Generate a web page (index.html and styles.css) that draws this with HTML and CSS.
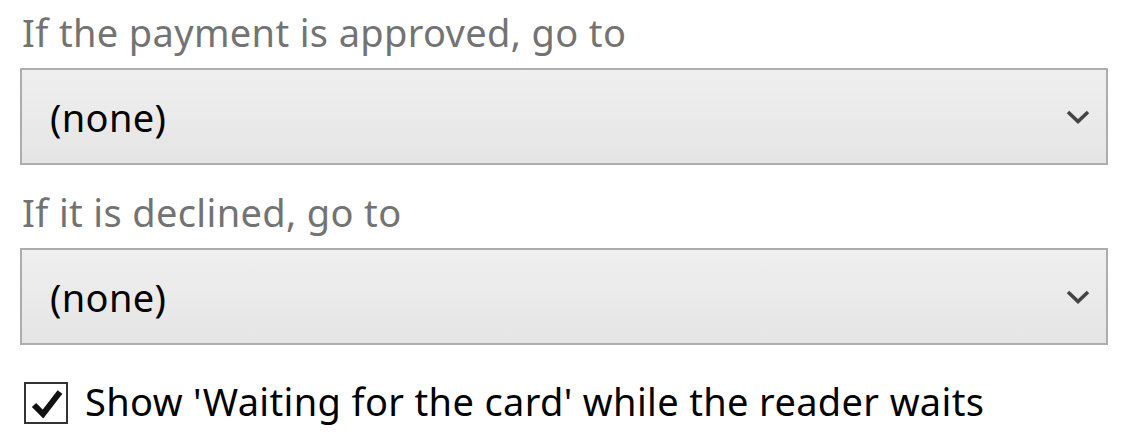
FILE: index.html
```html
<!DOCTYPE html>
<html>
<head>
<meta charset="utf-8">
<link rel="stylesheet" href="styles.css">
</head>
<body>
<div class="form">
  <div class="field">
    <label class="field-label">If the payment is approved, go to</label>
    <div class="combo">
      <span class="combo-value">(none)</span>
      <svg class="chevron" width="24" height="14" viewBox="0 0 24 14"><path d="M2 2 L12 11.5 L22 2" fill="none" stroke="#444" stroke-width="3.6"/></svg>
    </div>
  </div>
  <div class="field">
    <label class="field-label">If it is declined, go to</label>
    <div class="combo">
      <span class="combo-value">(none)</span>
      <svg class="chevron" width="24" height="14" viewBox="0 0 24 14"><path d="M2 2 L12 11.5 L22 2" fill="none" stroke="#444" stroke-width="3.6"/></svg>
    </div>
  </div>
  <label class="check">
    <span class="check-box">
      <svg width="40" height="40" viewBox="0 0 40 40"><path d="M8 22 L17 31 L34 9" fill="none" stroke="#111" stroke-width="6"/></svg>
    </span>
    <span class="check-text">Show 'Waiting for the card' while the reader waits</span>
  </label>
</div>
</body>
</html>
```
FILE: styles.css
```css
html, body {
  margin: 0;
  padding: 0;
  background: #ffffff;
}
.form {
  width: 1088px;
  padding: 6px 0 0 20px;
  font-family: "Noto Sans", "Open Sans", sans-serif;
  font-size: 38px;
  letter-spacing: 0.35px;
}
.field {
  display: flex;
  flex-direction: column;
}
.field + .field {
  margin-top: 21px;
}
.field-label {
  display: block;
  line-height: 52px;
  color: #737373;
  padding-left: 2px;
}
.combo {
  margin-top: 10px;
  height: 97px;
  box-sizing: border-box;
  border: 2px solid #adadad;
  background: linear-gradient(#efefef, #e5e5e5);
  display: flex;
  align-items: center;
  justify-content: space-between;
  padding: 0 16px 0 28px;
}
.combo-value {
  color: #000;
  line-height: 52px;
}
.chevron {
  display: block;
}
.check {
  margin-top: 32px;
  display: flex;
  align-items: center;
  height: 52px;
  padding-left: 4px;
}
.check-box {
  width: 44px;
  height: 42px;
  box-sizing: border-box;
  border: 2px solid #333;
  background: #fff;
  display: flex;
  align-items: center;
  justify-content: center;
}
.check-text {
  margin-left: 17px;
  color: #000;
  line-height: 52px;
  position: relative;
  top: -2px;
}
```
